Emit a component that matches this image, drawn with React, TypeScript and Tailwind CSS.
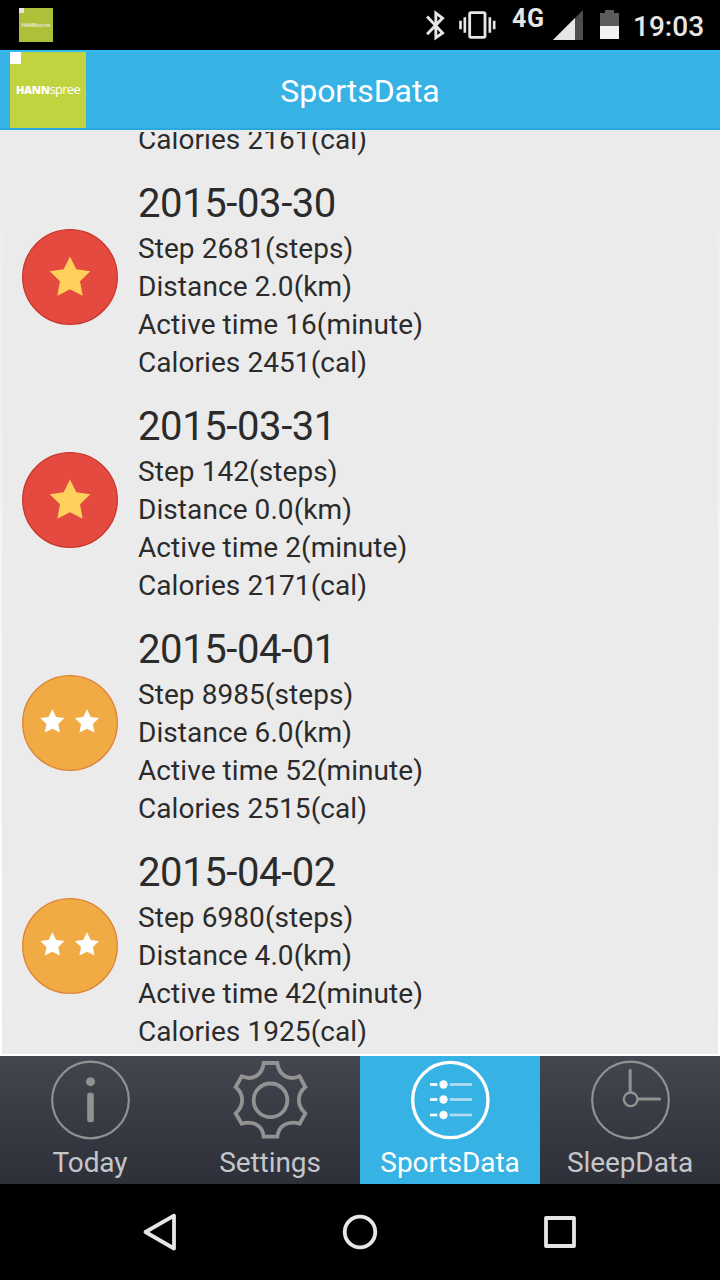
type DayRecord = {
  date: string;
  steps: number;
  distance: string;
  minutes: number;
  calories: number;
  stars: 1 | 2;
};

const records: DayRecord[] = [
  { date: '2015-03-30', steps: 2681, distance: '2.0', minutes: 16, calories: 2451, stars: 1 },
  { date: '2015-03-31', steps: 142, distance: '0.0', minutes: 2, calories: 2171, stars: 1 },
  { date: '2015-04-01', steps: 8985, distance: '6.0', minutes: 52, calories: 2515, stars: 2 },
  { date: '2015-04-02', steps: 6980, distance: '4.0', minutes: 42, calories: 1925, stars: 2 },
];

const STAR =
  '48,27.5 54.3,40.3 68.3,42.3 58,52.3 60.7,66.7 48,60.3 35.3,66.7 38,52.3 27.7,42.3 41.7,40.3';

function Rating({ stars }: { stars: 1 | 2 }) {
  return (
    <svg viewBox="0 0 96 96" className="mb-[2px] h-24 w-24 shrink-0" aria-hidden="true">
      {stars === 1 ? (
        <>
          <circle cx="48" cy="48" r="47.3" fill="#e44a3f" stroke="#c9352c" strokeWidth="1.3" />
          <polygon points={STAR} fill="#ffd15c" />
        </>
      ) : (
        <>
          <circle cx="48" cy="48" r="47.3" fill="#f0ab44" stroke="#df8233" strokeWidth="1.3" />
          <polygon points={STAR} fill="#fff" transform="translate(1.8 17.9) scale(0.595)" />
          <polygon points={STAR} fill="#fff" transform="translate(36.4 17.9) scale(0.595)" />
        </>
      )}
    </svg>
  );
}

function DayRow({ record }: { record: DayRecord }) {
  return (
    <li className="flex h-[223px] shrink-0 items-center gap-5 pl-[22px]">
      <Rating stars={record.stars} />
      <div className="h-full pt-[14px] text-[28px] leading-[38px] tracking-[0.07px]">
        <h2 className="h-[50px] text-[40px] leading-[47px] tracking-[-0.4px]">{record.date}</h2>
        <p>Step {record.steps}(steps)</p>
        <p>Distance {record.distance}(km)</p>
        <p>Active time {record.minutes}(minute)</p>
        <p>Calories {record.calories}(cal)</p>
      </div>
    </li>
  );
}

function StatusBar() {
  return (
    <div className="flex h-[50px] shrink-0 items-start bg-black text-[#e6e6e6]">
      <div className="mt-2 ml-[19px] flex h-[34px] w-[34px] flex-col bg-[#aebf3a]">
        <span className="h-[5px] w-[5px] bg-[#e6e6e6]" />
        <span className="mt-[8px] text-center text-[5.5px] leading-[8px]">
          <b>HANN</b>spree
        </span>
      </div>
      <svg viewBox="48 30 56 92" className="mt-[10px] ml-[373px] h-[31px] w-[19px]" fill="none" stroke="currentColor" strokeWidth="8.500">
        <path d="M51 49 L97 98 L77 112 V39 L97 54 L51 102" />
      </svg>
      <svg viewBox="146 30 111 90" className="mt-[10px] ml-[14px] h-[30px] w-[37px]" fill="none" stroke="currentColor" strokeWidth="8">
        <rect x="178" y="38" width="46" height="74" rx="4" strokeWidth="8.5" />
        <path d="M150.500 62V88M163.500 52V98M238.500 52V98M251.500 62V88" />
      </svg>
      <span className="mt-[4px] ml-4 w-[34px] text-[25px] leading-[30px] font-bold tracking-[0.6px]">4G</span>
      <svg viewBox="0 0 30 30" className="mt-[10px] ml-[7px] h-[30px] w-[30px]">
        <path d="M0 30 L30 0 V30Z" fill="#4d4d4d" />
        <path d="M0 30 L22 8 V30Z" fill="currentColor" />
      </svg>
      <svg viewBox="0 0 20 30" className="mt-[10px] ml-[17px] h-[30px] w-5">
        <path d="M0 3H5V0H14V3H19V16H0Z" fill="#5c5c5c" />
        <path d="M0 16H19V29H0Z" fill="#f2f2f2" />
      </svg>
      <span className="mt-[10px] ml-[13px] text-[28px] leading-[34px] font-medium">19:03</span>
    </div>
  );
}

function Header() {
  return (
    <header className="relative flex h-20 shrink-0 items-center justify-center border-t-2 border-b-2 border-t-[#33bbf4] border-b-[#29a9de] bg-[#36b2e4]">
      <div className="absolute top-0 left-[10px] flex h-[76px] w-[76px] flex-col bg-[#c1d33f] text-white">
        <span className="h-3 w-[11px] bg-white" />
        <span className="mt-[17px] text-center font-['Open_Sans'] text-[13px] leading-[17px] tracking-[-0.7px]">
          <b className="text-[11px] font-extrabold tracking-[-0.3px]">HANN</b>spree
        </span>
      </div>
      <h1 className="pt-[2px] text-[32px] leading-[38px] tracking-[-0.08px] text-white">SportsData</h1>
    </header>
  );
}

function TodayIcon() {
  return (
    <g stroke="#929292" fill="none">
      <circle cx="271.500" cy="180" r="115" strokeWidth="6.500" />
      <circle cx="271.500" cy="125" r="13.500" fill="#929292" stroke="none" />
      <rect x="261.500" y="158" width="20" height="89" rx="7" fill="#929292" stroke="none" />
    </g>
  );
}

function SettingsIcon() {
  return (
    <g stroke="#929292" fill="none" strokeWidth="11.500">
      <circle cx="271.500" cy="181" r="50.500" />
      <path d="M251 69H292C296 102 322 124 359 109L376 141C350 163 350 197 376 220L359 251C322 240 295 258 292 290H251C248 258 222 240 185 251L167 220C193 197 193 163 167 141L185 109C222 124 247 102 251 69Z" />
    </g>
  );
}

function SportsIcon() {
  return (
    <g stroke="#fff" fill="none">
      <circle cx="271" cy="180" r="113" strokeWidth="10" />
      {[133.5, 178.5, 225].map((y) => (
        <g key={y}>
          <path d={`M210 ${y}H232`} strokeWidth="8" />
          <path d={`M269 ${y}H336`} strokeWidth="8" stroke="#b5dcee" />
          <circle cx="250.500" cy={y} r="12.500" fill="#fff" stroke="none" />
        </g>
      ))}
    </g>
  );
}

function SleepIcon() {
  return (
    <g stroke="#929292" fill="none">
      <circle cx="271.500" cy="180" r="115" strokeWidth="6.500" />
      <circle cx="272" cy="178" r="20.500" strokeWidth="7" />
      <path d="M270.500 157V91M293 177H359" strokeWidth="9" strokeLinecap="round" />
    </g>
  );
}

const tabs = [
  { label: 'Today', Icon: TodayIcon },
  { label: 'Settings', Icon: SettingsIcon },
  { label: 'SportsData', Icon: SportsIcon, active: true },
  { label: 'SleepData', Icon: SleepIcon },
];

function TabBar() {
  return (
    <nav className="grid h-32 shrink-0 grid-cols-4 bg-linear-to-b from-[#43464f] to-[#2d3039]">
      {tabs.map(({ label, Icon, active }) => (
        <button
          key={label}
          type="button"
          className={`flex flex-col items-center pt-1 text-[28px] leading-[33px] tracking-[-0.08px] ${
            active ? 'bg-[#36b2e4] text-white' : 'text-[#c3c6ca]'
          }`}
        >
          <svg viewBox="150 60 240 240" className="h-20 w-20" aria-hidden="true">
            <Icon />
          </svg>
          <span className="mt-[6px]">{label}</span>
        </button>
      ))}
    </nav>
  );
}

function NavigationBar() {
  return (
    <div className="flex h-24 shrink-0 items-center justify-between bg-black px-[140px]">
      <svg viewBox="0 0 40 40" className="h-10 w-10" fill="none" stroke="#e6e6e6" strokeWidth="3.800" strokeLinejoin="round">
        <path d="M34 3.700V36.500L5.500 20Z" />
      </svg>
      <svg viewBox="0 0 40 40" className="h-10 w-10" fill="none" stroke="#e6e6e6" strokeWidth="3.800">
        <circle cx="20" cy="20" r="15.300" />
      </svg>
      <svg viewBox="0 0 40 40" className="h-10 w-10" fill="none" stroke="#e6e6e6" strokeWidth="3.800" strokeLinejoin="round">
        <rect x="6" y="6" width="28" height="28" />
      </svg>
    </div>
  );
}

export default function App() {
  return (
    <div className="flex h-[1280px] w-[720px] flex-col overflow-hidden bg-white font-[Roboto,sans-serif]">
      <StatusBar />
      <Header />
      <main className="flex min-h-0 flex-1 bg-linear-to-b from-[#ebebeb] to-white px-[2px] pb-[2px]">
        <div className="flex-1 bg-[#ebebeb] pt-[2px]">
          <ul className="-mx-[2px] h-full overflow-hidden text-[#2b2b2b]">
            <li className="-mt-[11px] h-[45px] pl-[138px] text-[28px] leading-[38px] tracking-[0.07px]">
              Calories 2161(cal)
            </li>
            {records.map((record) => (
              <DayRow key={record.date} record={record} />
            ))}
          </ul>
        </div>
      </main>
      <TabBar />
      <NavigationBar />
    </div>
  );
}
